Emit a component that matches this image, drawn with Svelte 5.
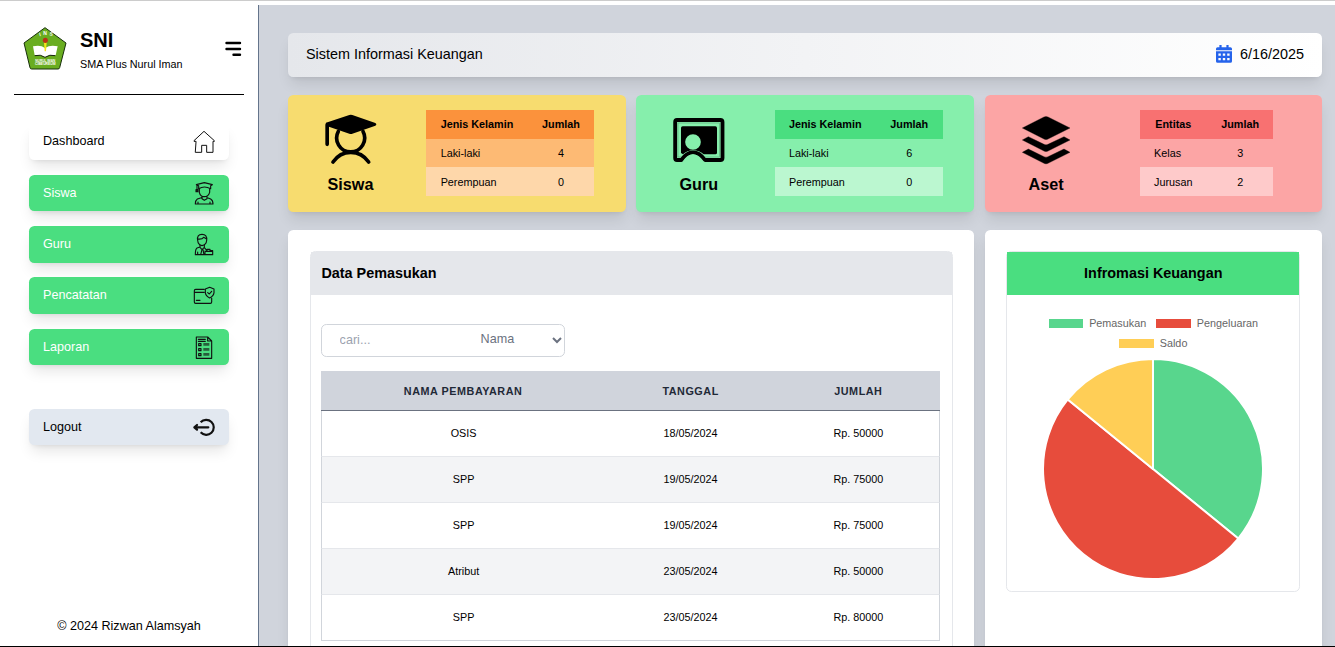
<script>
  const menu = [
    { label: 'Dashboard', icon: 'home', kind: 'plain' },
    { label: 'Siswa', icon: 'student', kind: 'green' },
    { label: 'Guru', icon: 'teacher', kind: 'green' },
    { label: 'Pencatatan', icon: 'card', kind: 'green' },
    { label: 'Laporan', icon: 'report', kind: 'green' }
  ];
  const boxes = {
    home: '537 61 66 69',
    student: '537 215 66 69',
    teacher: '537 54 66 69',
    card: '537 207 66 69',
    report: '537 361 66 69',
    logout: '537 77 66 69'
  };
  const cards = [
    { name: 'Siswa', cls: 'yellow', head: 'Jenis Kelamin', rows: [['Laki-laki', 4], ['Perempuan', 0]] },
    { name: 'Guru', cls: 'green', head: 'Jenis Kelamin', rows: [['Laki-laki', 6], ['Perempuan', 0]] },
    { name: 'Aset', cls: 'red', head: 'Entitas', rows: [['Kelas', 3], ['Jurusan', 2]] }
  ];
  const payments = [
    ['OSIS', '18/05/2024', 'Rp. 50000'],
    ['SPP', '19/05/2024', 'Rp. 75000'],
    ['SPP', '19/05/2024', 'Rp. 75000'],
    ['Atribut', '23/05/2024', 'Rp. 50000'],
    ['SPP', '23/05/2024', 'Rp. 80000']
  ];
  const slices = [
    { label: 'Pemasukan', color: '#58d68d', from: 0, to: 129.2 },
    { label: 'Pengeluaran', color: '#e74c3c', from: 129.2, to: 309.2 },
    { label: 'Saldo', color: '#ffce56', from: 309.2, to: 360 }
  ];
  const R = 110;
  const point = (deg) => {
    const a = (deg * Math.PI) / 180;
    return `${(111 + R * Math.sin(a)).toFixed(2)} ${(111 - R * Math.cos(a)).toFixed(2)}`;
  };
  const slicePath = (s) =>
    `M111 111L${point(s.from)}A${R} ${R} 0 0 1 ${point((s.from + s.to) / 2)}A${R} ${R} 0 0 1 ${point(s.to)}Z`;
</script>

{#snippet menuIcon(name)}
  <svg class="mi" viewBox={boxes[name]} fill="none" stroke="#111" stroke-width="3.4" stroke-linejoin="round" stroke-linecap="round">
    {#if name === 'home'}
      <path d="M545 95H540V93L570 65L601 93V95H597V128H578V107H563V128H545Z" stroke-width="3" />
    {:else if name === 'student'}
      <path d="M547 223L571 217L595 223L590 226V235Q571 225 554 235V226ZM549 225V240M546 238V244H552V238Z" />
      <path d="M556 236V246Q559 259 571 259Q583 259 587 246V236M564 258V265L571 270L579 265V258M562 262L550 266Q544 270 544 281H597Q597 270 590 266L580 262M552 275V281M588 275V281" />
    {:else if name === 'teacher'}
      <path d="M551 76Q548 58 564 58Q580 58 578 76Q577 90 564 92Q552 90 551 76ZM551 72Q564 74 569 67L578 72" />
      <path d="M558 91V96L549 99Q544 102 544 119H596V107H588V103H579V107L571 98V91M558 97L564 104L571 97M564 104L560 119M567 104L570 119M575 109H596M579 103H588M551 111V119M573 108V119" />
    {:else if name === 'card'}
      <path d="M571 223H545Q541 223 541 227V261Q541 265 545 265H589Q593 265 593 261V249M541 232H571M547 256H558" />
      <path d="M587 217L600 222V233Q599 243 587 249Q575 243 574 233V222ZM581 233L586 237L593 229" />
    {:else if name === 'report'}
      <path d="M581 364H547V428H593V376ZM581 364V376H593M553 371H574M553 377H574" />
      <path d="M554 384H561V390H554ZM554 399H561V405H554ZM554 414H561V420H554Z" />
      <path d="M568 386H586M568 401H586M568 416H586" stroke-width="8" stroke-opacity=".62" stroke-linecap="butt" />
    {:else}
      <path d="M560 96A22.500 22.500 0 1 1 560 126" stroke-width="6.5" stroke-linecap="butt" />
      <path d="M542 111H583M549 104L541 111L549 118" stroke-width="6.5" />
    {/if}
  </svg>
{/snippet}

<div class="page">
  <div class="body">
    <aside>
      <div class="brand">
        <svg class="logo" viewBox="68 80 132 129">
          <path d="M134 82L197 128L178 202Q177 206 173 206H94Q90 206 89 202L71 128Z" fill="#69ad20" stroke="#18300c" stroke-width="3" stroke-linejoin="round" />
          <path d="M98 138Q120 132 134 143Q150 132 172 138L166 165Q146 162 134 171Q122 162 103 165Z" fill="#fff" />
          <path d="M103 166Q121 161 134 171Q148 161 165 166" fill="none" stroke="#182410" stroke-width="3" />
          <path d="M131 126H139L137 153H133Z" fill="#f5e51c" />
          <ellipse cx="135" cy="120" rx="7.500" ry="8" fill="#b83416" />
          <text x="118" y="108" transform="rotate(-16 118 108)" font-size="15">I</text>
          <text x="129" y="105" font-size="15">N</text>
          <text x="147" y="105" transform="rotate(12 147 105)" font-size="15">S</text>
          <text x="135" y="186" text-anchor="middle" font-size="10" textLength="60" lengthAdjust="spacingAndGlyphs">NURUL IMAN</text>
          <text x="135" y="195" text-anchor="middle" font-size="10" textLength="62" lengthAdjust="spacingAndGlyphs">CIBEUREUM</text>
        </svg>
        <div class="names"><h1>SNI</h1><p>SMA Plus Nurul Iman</p></div>
        <svg class="burger" viewBox="0 0 18 16" stroke="#000" stroke-width="2.4" stroke-linecap="round"><path d="M2.500 2H16M2.500 8H16M9.500 13.700H16" /></svg>
      </div>
      <nav>
        {#each menu as item}
          <a class={item.kind} href="#top"><span>{item.label}</span>{@render menuIcon(item.icon)}</a>
        {/each}
        <a class="logout" href="#top"><span>Logout</span>{@render menuIcon('logout')}</a>
      </nav>
      <footer>© 2024 Rizwan Alamsyah</footer>
    </aside>

    <main>
      <header>
        <span>Sistem Informasi Keuangan</span>
        <div class="date">
          <svg viewBox="0 0 16 18" width="16" height="18" fill="#2563eb">
            <path fill-rule="evenodd" d="M3.4 0h2.2v2.2h4.8V0h2.2v2.2H14.4Q16 2.2 16 3.8V5.2H0V3.8Q0 2.2 1.6 2.2H3.4ZM0 6.2H16V16.2Q16 17.8 14.4 17.8H1.6Q0 17.8 0 16.2ZM2.4 8.6V10.8H4.8V8.6ZM6.8 8.6V10.8H9.2V8.6ZM11.2 8.6V10.8H13.6V8.6ZM2.4 13V15.2H4.8V13ZM6.8 13V15.2H9.2V13ZM11.2 13V15.2H13.6V13Z" />
          </svg>
          <span>6/16/2025</span>
        </div>
      </header>

      <section class="grid">
        {#each cards as card}
          <article class="card {card.cls}">
            <div class="who">
              {#if card.name === 'Siswa'}
                <svg viewBox="134 88 156 153">
                  <g fill="none" stroke="#000" stroke-width="11" stroke-linecap="round" stroke-linejoin="round">
                    <path d="M140.500 120V179M174 140A42 42 0 1 0 248 140M158 232Q178 203 211 203Q245 203 265 232" />
                  </g>
                  <path d="M137 114L207 91Q211 89 216 91L285 115Q291 119 285 123L216 147Q211 149 207 147L137 123Z" />
                </svg>
              {:else if card.name === 'Guru'}
                <svg viewBox="128 88 156 153">
                  <path d="M153 226H140Q134.500 226 134.500 220V112Q134.500 106 140 106H270Q276.500 106 276.500 112V220Q276.500 226 270 226H224Q208 203 188 203Q168 203 153 226Z" fill="none" stroke="#000" stroke-width="11.500" stroke-linejoin="round" />
                  <rect x="143" y="115" width="125" height="102" fill="none" stroke="#000" stroke-opacity=".3" stroke-width="2" />
                  <path fill-rule="evenodd" d="M157 125H255Q260 125 260 130V204Q260 209 255 209H220Q207 197 188 197Q171 197 158 209L152 205V130Q152 125 157 125ZM188 148.500A23.500 23.500 0 1 0 188 195.500A23.500 23.500 0 1 0 188 148.500Z" />
                  <path d="M154 240Q168 209 188 209Q208 209 222 240Z" fill="#86efac" />
                </svg>
              {:else}
                <svg viewBox="136 88 156 153" stroke="#000" stroke-width="1" stroke-linejoin="round">
                  <path d="M143 130L208 97Q214 94 220 97L286 130L220 163Q214 166 208 163ZM143 166L161 156L208 179Q214 182 220 179L268 156L286 166L220 199Q214 202 208 199ZM143 203L161 193L208 216Q214 219 220 216L268 193L286 203L220 236Q214 239 208 236Z" />
                </svg>
              {/if}
              <h2>{card.name}</h2>
            </div>
            <div class="stats">
              <table>
                <thead><tr><th>{card.head}</th><th>Jumlah</th></tr></thead>
                <tbody>
                  {#each card.rows as row}
                    <tr><td>{row[0]}</td><td class="num">{row[1]}</td></tr>
                  {/each}
                </tbody>
              </table>
            </div>
          </article>
        {/each}

        <article class="panel wide">
          <div class="box income">
            <h3>Data Pemasukan</h3>
            <div class="content">
              <div class="search">
                <input placeholder="cari..." />
                <div class="pick">
                  <span>Nama</span>
                  <svg viewBox="0 0 10 7" width="10" height="7" fill="none" stroke="#6b7280" stroke-width="2"><path d="M1 1L5 5L9 1" /></svg>
                </div>
              </div>
              <table class="data">
                <thead><tr><th>NAMA PEMBAYARAN</th><th>TANGGAL</th><th>JUMLAH</th></tr></thead>
                <tbody>
                  {#each payments as row}
                    <tr>{#each row as cell}<td>{cell}</td>{/each}</tr>
                  {/each}
                </tbody>
              </table>
            </div>
          </div>
        </article>

        <article class="panel">
          <div class="box finance">
            <h3>Infromasi Keuangan</h3>
            <ul>
              {#each slices as s}
                <li><i style="background:{s.color}"></i>{s.label}</li>
              {/each}
            </ul>
            <svg class="pie" viewBox="0 0 222 222">
              {#each slices as s}
                <path d={slicePath(s)} fill={s.color} stroke="#fff" stroke-width="2" stroke-linejoin="round" />
              {/each}
            </svg>
          </div>
        </article>
      </section>
    </main>
  </div>
</div>

<style>
  :global(body) { margin: 0; overflow: hidden; }
  * { box-sizing: border-box; }
  h1, h2, h3, p, ul { margin: 0; padding: 0; }
  .page {
    height: 647px; display: flex; flex-direction: column; overflow: hidden;
    border-top: 1px solid #ccc; border-bottom: 1px solid #000; padding-top: 4px;
    background: #fff; color: #000; font: 14.4px/21.6px "Liberation Sans", Arial, sans-serif;
  }
  .body { flex: 1; min-height: 0; display: flex; background: #d0d4dc; }
  aside {
    width: 259px; flex: none; display: flex; flex-direction: column; background: #fff;
    border-right: 1px solid #64748b; padding: 0 14px;
  }
  .brand { height: 90px; flex: none; display: flex; align-items: flex-start; border-bottom: 1px solid #000; padding: 22px 2px 0 9px; }
  .logo { width: 44px; height: 43px; flex: none; fill: #fff; font-weight: bold; }
  .names { flex: 1; padding-left: 13px; }
  h1 { font-size: 20px; line-height: 28px; margin-top: -1px; }
  .names p { font-size: 10.8px; line-height: 14px; margin-top: 3px; }
  .burger { width: 18px; height: 16px; margin-top: 14px; }
  nav { display: flex; flex-direction: column; gap: 14.7px; padding: 28.6px 15px 0; }
  nav a {
    height: 36.6px; border-radius: 5.4px; display: flex; align-items: center; justify-content: space-between;
    padding: 0 14px; font-size: 12.6px; line-height: 18px; text-decoration: none; color: #000;
    box-shadow: 0 9px 13.5px -2.7px rgba(0,0,0,.1), 0 3.6px 5.4px -3.6px rgba(0,0,0,.1);
  }
  nav a span { margin-top: -.6px; }
  nav .green { background: #4ade80; color: #fff; }
  nav .plain { background: #fff; }
  nav .plain span { margin-top: -1.5px; }
  nav .logout { background: #e2e8f0; margin-top: 28.8px; }
  .mi { width: 22px; height: 23px; }
  footer { margin-top: auto; padding-bottom: 10px; text-align: center; font-size: 12.6px; line-height: 19px; }
  main { flex: 1; min-width: 0; padding: 28px 13px 0 29px; }
  header {
    height: 44px; display: flex; align-items: center; justify-content: space-between; padding: 0 18px;
    border-radius: 5.4px; background: linear-gradient(to right, #e5e7eb, #fff);
    box-shadow: 0 9px 13.5px -2.7px rgba(0,0,0,.1), 0 3.6px 5.4px -3.6px rgba(0,0,0,.1);
  }
  header > span, .date span { margin-top: -1px; }
  .date { display: flex; align-items: center; gap: 8px; }
  .date svg { margin-top: -3px; }
  .grid { display: grid; grid-template-columns: 338px 338px 337.4px; grid-template-rows: 116.5px 560px; gap: 18px 10.3px; margin-top: 18.4px; }
  .card, .panel {
    border-radius: 5.4px;
    box-shadow: 0 9px 13.5px -2.7px rgba(0,0,0,.1), 0 3.6px 5.4px -3.6px rgba(0,0,0,.1);
  }
  .card { display: grid; grid-template-columns: 125px 1fr; padding: 14.4px 18.5px 0 0; }
  .yellow { background: #f7dc6f; --h: #fb923c; --a: #fdba74; --b: #fed7aa; }
  .card.green { background: #86efac; --h: #4ade80; --a: #86efac; --b: #bbf7d0; }
  .red { background: #fca5a5; --h: #f87171; --a: #fca5a5; --b: #fecaca; }
  .who { display: flex; flex-direction: column; align-items: center; padding-top: 4px; }
  .who svg { width: 52px; height: 51px; }
  h2 { font-size: 16.2px; line-height: 24px; margin-top: 7px; }
  .red .who { padding-right: 2px; }
  .stats { display: flex; justify-content: center; }
  .stats table { border-collapse: collapse; font-size: 10.8px; line-height: 14.4px; align-self: flex-start; }
  .stats th, .stats td { padding: 7.2px 14.4px; text-align: left; }
  .stats th { background: var(--h); }
  .red .stats th:first-child { text-align: center; }
  .stats .num { text-align: center; }
  .stats tbody tr { background: var(--a); }
  .stats tbody tr:last-child { background: var(--b); }
  .panel { background: #fff; padding: 21px 21.6px; }
  .wide { grid-column: span 2; }
  .box { border: 1px solid #e5e7eb; border-radius: 5.4px; }
  h3 { height: 43px; font-size: 14.4px; line-height: 42px; }
  .income { height: 500px; }
  .income h3 { background: #e5e7eb; padding-left: 10.8px; }
  .content { padding: 29px 11px 0 10px; }
  .search { width: 244px; height: 33px; display: flex; align-items: center; border: 1px solid #d1d5db; border-radius: 5.4px; font-size: 12.6px; color: #6b7280; }
  input { width: 159px; border: 0; outline: 0; background: none; padding: 0 0 0 18px; font: inherit; color: inherit; }
  input::placeholder { color: #9ca3af; opacity: 1; }
  .pick { flex: 1; display: flex; align-items: center; justify-content: space-between; padding-right: 2px; }
  .pick span { margin-top: -1px; }
  .data { width: 619.5px; margin-top: 14px; table-layout: fixed; border-collapse: separate; border-spacing: 0; font-size: 10.8px; line-height: 14px; text-align: center; }
  .data th { height: 40px; padding: 1px 0 0 1px; background: #d0d4dc; border-bottom: 1px solid #6b7280; color: #1f2937; letter-spacing: .54px; }
  .data th:nth-child(1) { width: 284px; }
  .data th:nth-child(2) { width: 171px; }
  .data td { height: 46px; padding: 0 0 0 1px; border-bottom: 1px solid #e5e7eb; }
  .data td:first-child { border-left: 1px solid #d1d5db; }
  .data td:last-child { border-right: 1px solid #d1d5db; padding-left: 2px; }
  .data tr:nth-child(even) td { background: #f3f4f6; }
  .data tr:last-child td { border-bottom-color: #d1d5db; }
  .finance { height: 341px; display: flex; flex-direction: column; align-items: center; }
  .finance h3 { align-self: stretch; text-align: center; background: #4ade80; }
  ul { list-style: none; display: flex; flex-wrap: wrap; justify-content: center; gap: 0 10px; padding: 18.4px 30px 0; font-size: 10.8px; line-height: 20px; color: #666; }
  li { display: flex; align-items: center; gap: 6px; height: 20px; }
  li i { width: 34.6px; height: 9.4px; margin-top: 1px; }
  .pie { width: 222px; height: 222px; margin-top: 5px; }
</style>
